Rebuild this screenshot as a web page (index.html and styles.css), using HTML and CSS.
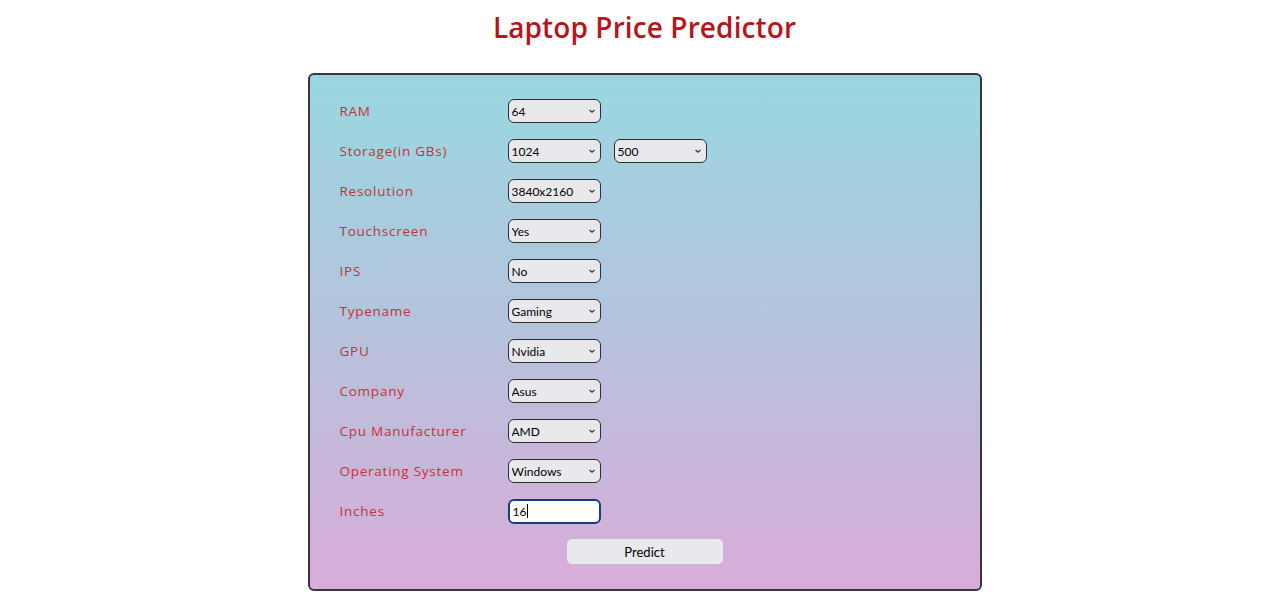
FILE: index.html
```html
<!DOCTYPE html>
<html lang="en">
<head>
<meta charset="utf-8">
<title>Laptop Price Predictor</title>
<link rel="stylesheet" href="styles.css">
</head>
<body>
<div class="page">
  <h1 class="title">Laptop Price Predictor</h1>
  <form class="card">
    <div class="row">
      <label class="label">RAM</label>
      <div class="controls">
        <span class="sel"><select><option>64</option></select><svg class="chev" viewBox="0 0 8 6"><path d="M1.5 2 L4 4.3 L6.5 2" /></svg></span>
      </div>
    </div>
    <div class="row">
      <label class="label">Storage(in GBs)</label>
      <div class="controls">
        <span class="sel"><select><option>1024</option></select><svg class="chev" viewBox="0 0 8 6"><path d="M1.5 2 L4 4.3 L6.5 2" /></svg></span>
        <span class="sel"><select><option>500</option></select><svg class="chev" viewBox="0 0 8 6"><path d="M1.5 2 L4 4.3 L6.5 2" /></svg></span>
      </div>
    </div>
    <div class="row">
      <label class="label">Resolution</label>
      <div class="controls">
        <span class="sel"><select><option>3840x2160</option></select><svg class="chev" viewBox="0 0 8 6"><path d="M1.5 2 L4 4.3 L6.5 2" /></svg></span>
      </div>
    </div>
    <div class="row">
      <label class="label">Touchscreen</label>
      <div class="controls">
        <span class="sel"><select><option>Yes</option></select><svg class="chev" viewBox="0 0 8 6"><path d="M1.5 2 L4 4.3 L6.5 2" /></svg></span>
      </div>
    </div>
    <div class="row">
      <label class="label">IPS</label>
      <div class="controls">
        <span class="sel"><select><option>No</option></select><svg class="chev" viewBox="0 0 8 6"><path d="M1.5 2 L4 4.3 L6.5 2" /></svg></span>
      </div>
    </div>
    <div class="row">
      <label class="label">Typename</label>
      <div class="controls">
        <span class="sel"><select><option>Gaming</option></select><svg class="chev" viewBox="0 0 8 6"><path d="M1.5 2 L4 4.3 L6.5 2" /></svg></span>
      </div>
    </div>
    <div class="row">
      <label class="label">GPU</label>
      <div class="controls">
        <span class="sel"><select><option>Nvidia</option></select><svg class="chev" viewBox="0 0 8 6"><path d="M1.5 2 L4 4.3 L6.5 2" /></svg></span>
      </div>
    </div>
    <div class="row">
      <label class="label">Company</label>
      <div class="controls">
        <span class="sel"><select><option>Asus</option></select><svg class="chev" viewBox="0 0 8 6"><path d="M1.5 2 L4 4.3 L6.5 2" /></svg></span>
      </div>
    </div>
    <div class="row">
      <label class="label">Cpu Manufacturer</label>
      <div class="controls">
        <span class="sel"><select><option>AMD</option></select><svg class="chev" viewBox="0 0 8 6"><path d="M1.5 2 L4 4.3 L6.5 2" /></svg></span>
      </div>
    </div>
    <div class="row">
      <label class="label">Operating System</label>
      <div class="controls">
        <span class="sel"><select><option>Windows</option></select><svg class="chev" viewBox="0 0 8 6"><path d="M1.5 2 L4 4.3 L6.5 2" /></svg></span>
      </div>
    </div>
    <div class="row">
      <label class="label">Inches</label>
      <div class="controls">
        <span class="inp"><span class="val">16</span><span class="caret"></span></span>
      </div>
    </div>
    <div class="actions">
      <button type="button" class="btn">Predict</button>
    </div>
  </form>
</div>
</body>
</html>
```
FILE: styles.css
```css
html, body {
  margin: 0;
  padding: 0;
  background: #ffffff;
}
.page {
  display: flex;
  flex-direction: column;
  align-items: center;
  padding-left: 9px;
}
.title {
  margin: 10px 0 0 0;
  height: 38px;
  line-height: 34px;
  font-family: "Open Sans", sans-serif;
  font-weight: 600;
  font-size: 28px;
  color: #b8151b;
  letter-spacing: 0.1px;
}
.card {
  margin-top: 25px;
  box-sizing: border-box;
  width: 674px;
  border: 2px solid #3a3340;
  border-radius: 6px;
  background: linear-gradient(to bottom, #98d8e1 0%, #b5c3dd 48%, #d9acd9 100%);
  padding: 24px 0 25px 30px;
  display: flex;
  flex-direction: column;
  gap: 16px;
}
.row {
  display: flex;
  align-items: center;
  height: 24px;
}
.label {
  width: 168px;
  font-family: "Open Sans", sans-serif;
  font-size: 13.5px;
  letter-spacing: 0.75px;
  color: #c5313a;
}
.controls {
  display: flex;
  gap: 13px;
}
.sel {
  position: relative;
  display: block;
  width: 93px;
  height: 24px;
}
.sel select {
  appearance: none;
  -webkit-appearance: none;
  width: 93px;
  height: 24px;
  box-sizing: border-box;
  border: 1.8px solid #2e2b33;
  border-radius: 6px;
  background: #e9e8ed;
  font-family: Lato, sans-serif;
  font-size: 12px;
  color: #000;
  padding: 0 0 0 3px;
  margin: 0;
  outline: none;
}
.chev {
  position: absolute;
  right: 5px;
  top: 9px;
  width: 8px;
  height: 6px;
  fill: none;
  stroke: #333;
  stroke-width: 1.2;
}
.inp {
  display: flex;
  align-items: center;
  width: 93px;
  height: 25px;
  box-sizing: border-box;
  border: 2px solid #163c87;
  border-radius: 6px;
  background: #ffffff;
  padding-left: 3px;
  font-family: Lato, sans-serif;
  font-size: 12px;
  color: #000;
}
.caret {
  display: block;
  width: 1px;
  height: 14px;
  background: #000;
  margin-left: 1px;
}
.actions {
  display: flex;
  padding-left: 227px;
}
.btn {
  width: 156px;
  height: 25px;
  border: none;
  border-radius: 5px;
  background: #e9e8ed;
  font-family: Lato, sans-serif;
  font-size: 13px;
  color: #000;
  padding: 0;
  cursor: pointer;
}
```
